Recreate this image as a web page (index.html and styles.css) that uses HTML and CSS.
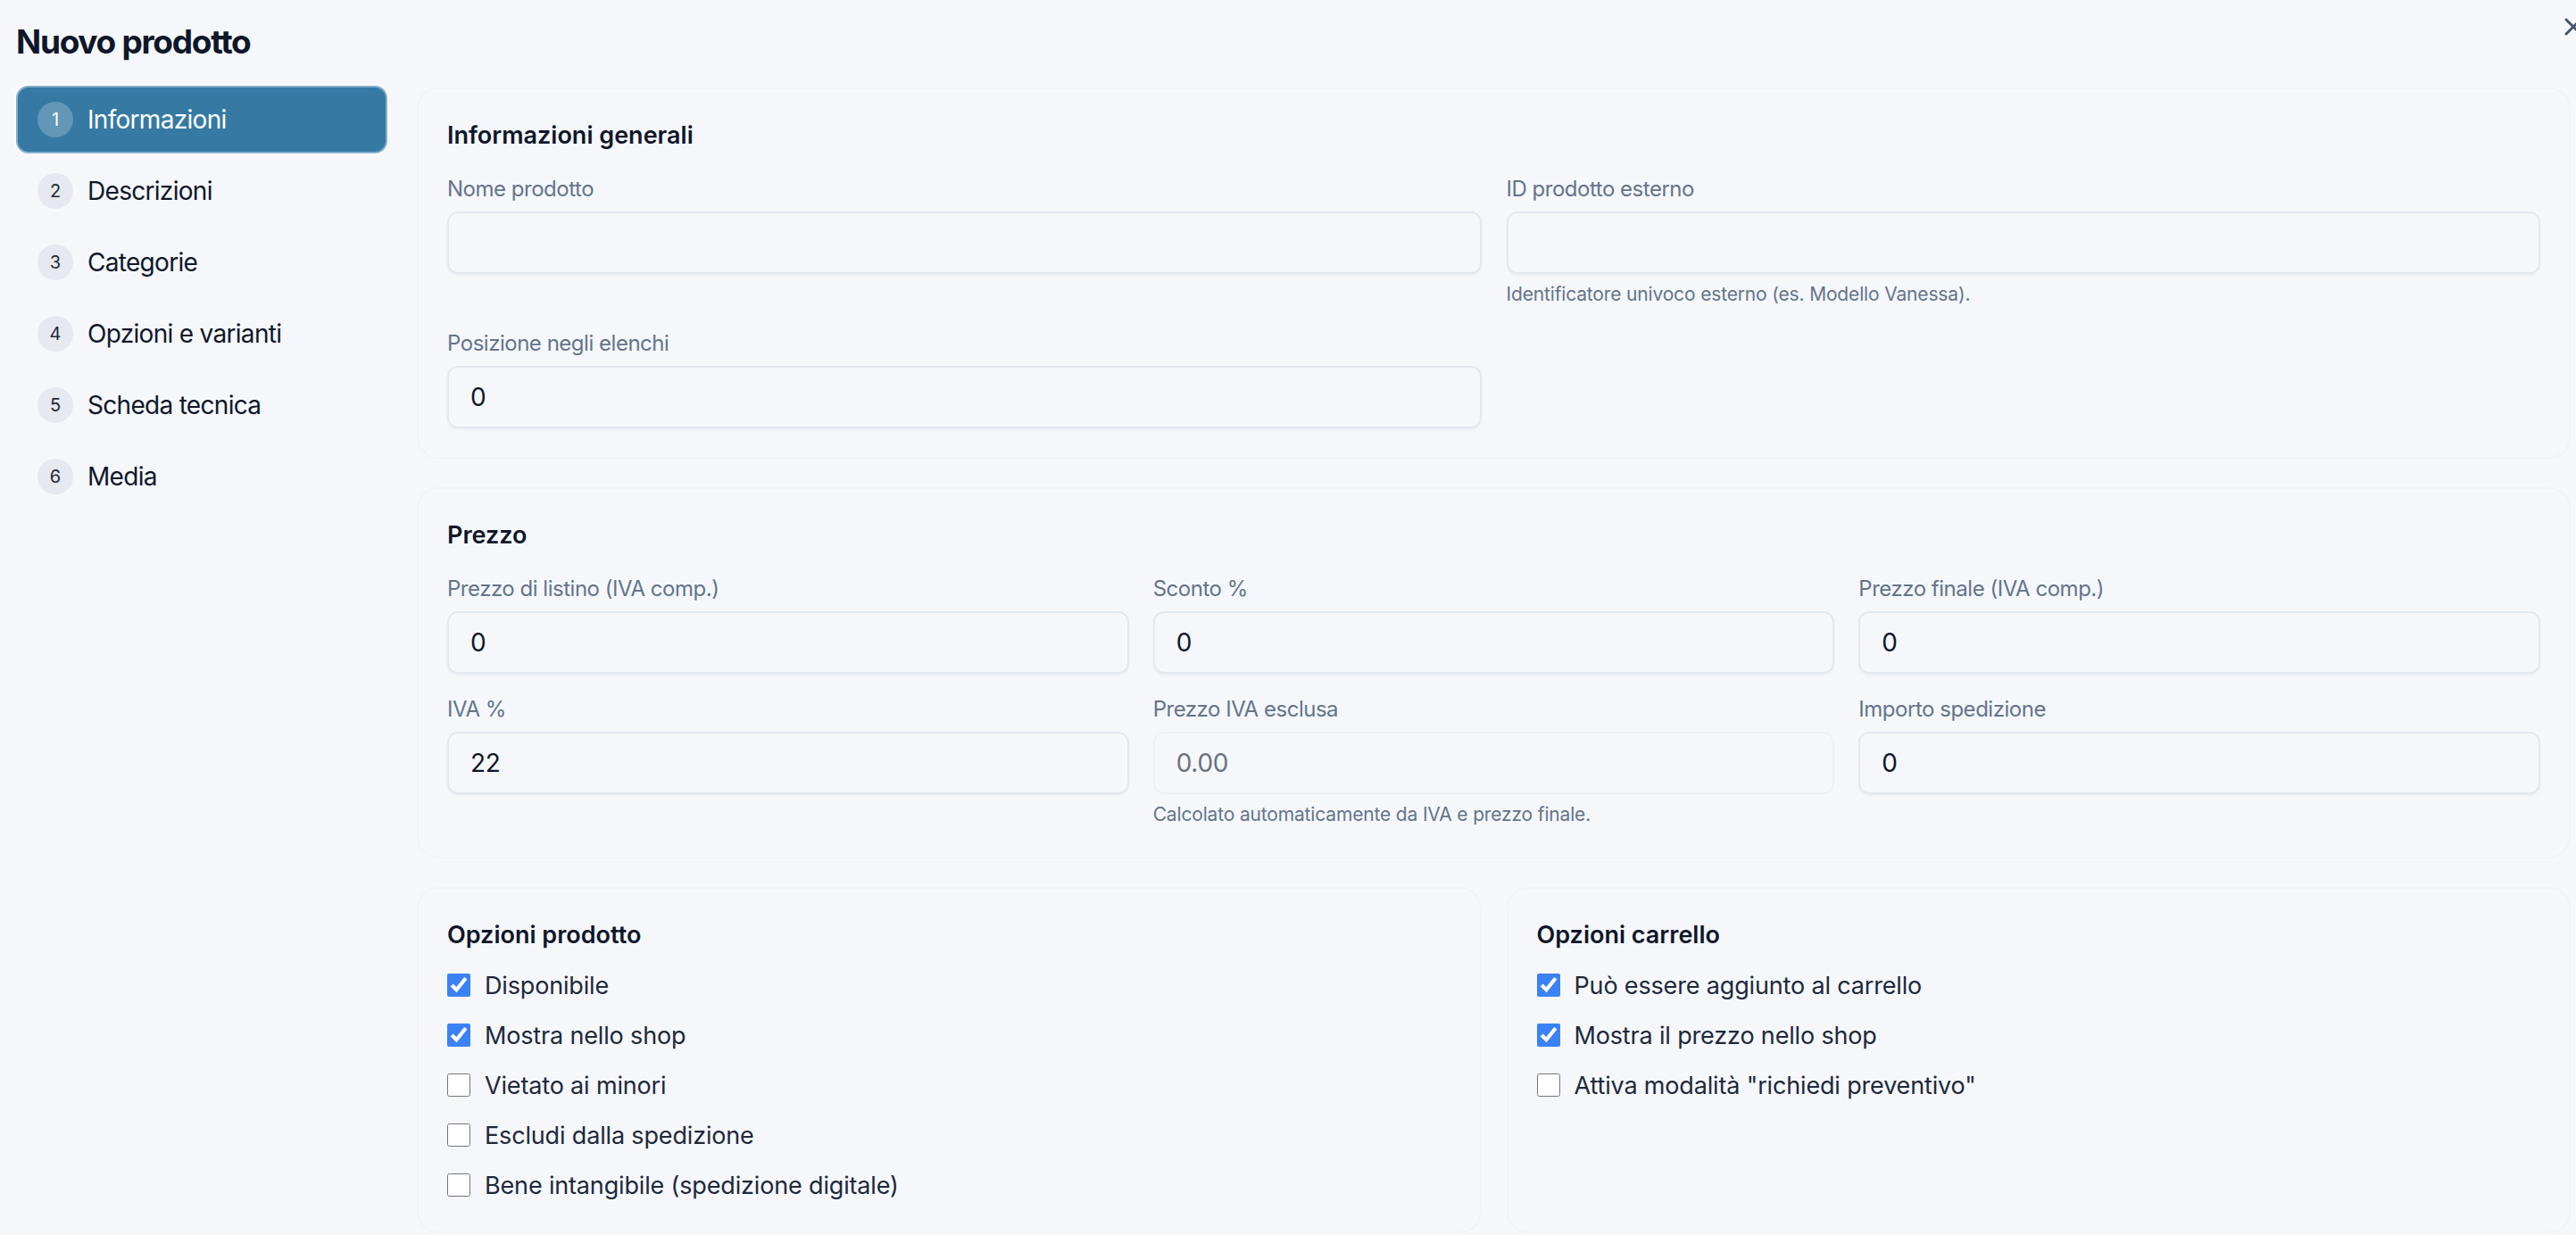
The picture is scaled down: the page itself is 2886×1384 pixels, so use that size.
FILE: index.html
```html
<!DOCTYPE html>
<html lang="it">
<head>
    <meta charset="UTF-8">
    <meta name="viewport" content="width=device-width, initial-scale=1.0">
    <title>Nuovo prodotto</title>
    <link rel="stylesheet" href="styles.css">
</head>
<body>
    <div class="modal">
        <button class="close-btn" type="button" aria-label="Chiudi">
            <svg width="22" height="22" viewBox="0 0 22 22" fill="none" stroke="currentColor" stroke-width="3" stroke-linecap="round">
                <path d="M3 3 L19 19 M19 3 L3 19"/>
            </svg>
        </button>

        <h1 class="modal-title">Nuovo prodotto</h1>

        <nav class="steps">
            <a class="step active" href="#"><span class="step-num">1</span>Informazioni</a>
            <a class="step" href="#"><span class="step-num">2</span>Descrizioni</a>
            <a class="step" href="#"><span class="step-num">3</span>Categorie</a>
            <a class="step" href="#"><span class="step-num">4</span>Opzioni e varianti</a>
            <a class="step" href="#"><span class="step-num">5</span>Scheda tecnica</a>
            <a class="step" href="#"><span class="step-num">6</span>Media</a>
        </nav>

        <main class="content">
            <section class="card">
                <h2>Informazioni generali</h2>
                <div class="grid cols-2">
                    <div class="field">
                        <label>Nome prodotto</label>
                        <input type="text" value="">
                    </div>
                    <div class="field">
                        <label>ID prodotto esterno</label>
                        <input type="text" value="">
                        <p class="hint">Identificatore univoco esterno (es. Modello Vanessa).</p>
                    </div>
                    <div class="field">
                        <label>Posizione negli elenchi</label>
                        <input type="text" value="0">
                    </div>
                </div>
            </section>

            <section class="card">
                <h2>Prezzo</h2>
                <div class="grid cols-3">
                    <div class="field">
                        <label>Prezzo di listino (IVA comp.)</label>
                        <input type="text" value="0">
                    </div>
                    <div class="field">
                        <label>Sconto %</label>
                        <input type="text" value="0">
                    </div>
                    <div class="field">
                        <label>Prezzo finale (IVA comp.)</label>
                        <input type="text" value="0">
                    </div>
                    <div class="field">
                        <label>IVA %</label>
                        <input type="text" value="22">
                    </div>
                    <div class="field">
                        <label>Prezzo IVA esclusa</label>
                        <input type="text" placeholder="0.00" disabled>
                        <p class="hint">Calcolato automaticamente da IVA e prezzo finale.</p>
                    </div>
                    <div class="field">
                        <label>Importo spedizione</label>
                        <input type="text" value="0">
                    </div>
                </div>
            </section>

            <div class="options-row">
                <section class="card options">
                    <h2>Opzioni prodotto</h2>
                    <label class="check"><input type="checkbox" checked> Disponibile</label>
                    <label class="check"><input type="checkbox" checked> Mostra nello shop</label>
                    <label class="check"><input type="checkbox"> Vietato ai minori</label>
                    <label class="check"><input type="checkbox"> Escludi dalla spedizione</label>
                    <label class="check"><input type="checkbox"> Bene intangibile (spedizione digitale)</label>
                </section>
                <section class="card options">
                    <h2>Opzioni carrello</h2>
                    <label class="check"><input type="checkbox" checked> Può essere aggiunto al carrello</label>
                    <label class="check"><input type="checkbox" checked> Mostra il prezzo nello shop</label>
                    <label class="check"><input type="checkbox"> Attiva modalità "richiedi preventivo"</label>
                </section>
            </div>
        </main>
    </div>
</body>
</html>
```

FILE: styles.css
```css
* {
    box-sizing: border-box;
}
html, body {
    margin: 0;
    overflow: hidden;
}
body {
    font-family: Inter, "Noto Sans", sans-serif;
    background: #f5f7fb;
    color: #0f172a;
    letter-spacing: -0.01em;
}
.modal {
    position: relative;
    display: grid;
    grid-template-columns: 416px 1fr;
    grid-template-rows: auto 1fr;
    column-gap: 33px;
    row-gap: 25px;
    padding: 23px 6px 0 18px;
    min-height: 1384px;
}
.close-btn {
    position: absolute;
    top: 19px;
    right: -8px;
    background: none;
    border: none;
    padding: 0;
    color: #475569;
    cursor: pointer;
}
.modal-title {
    grid-column: 1 / -1;
    margin: 0;
    font-size: 37px;
    line-height: 48px;
    font-weight: 700;
    letter-spacing: -0.035em;
}
.steps {
    display: flex;
    flex-direction: column;
    gap: 4px;
}
.step {
    display: flex;
    align-items: center;
    gap: 16px;
    height: 76px;
    padding: 0 22px;
    border: 2px solid transparent;
    border-radius: 14px;
    color: #0f172a;
    text-decoration: none;
    font-size: 28px;
    letter-spacing: -0.025em;
}
.step-num {
    display: flex;
    align-items: center;
    justify-content: center;
    width: 40px;
    height: 40px;
    border-radius: 50%;
    background: #e6e9f0;
    color: #1e293b;
    font-size: 20px;
    letter-spacing: 0;
}
.step.active {
    background: #367aa4;
    border-color: #86afcb;
    box-shadow: 0 0 0 2px #ffffff;
    color: #ffffff;
}
.step.active .step-num {
    background: rgba(255, 255, 255, 0.22);
    color: #ffffff;
}
.content {
    display: flex;
    flex-direction: column;
    gap: 32px;
    margin-top: 2px;
}
.card {
    border: 2px solid #f1f3f7;
    border-radius: 24px;
    padding: 32px;
}
.card h2 {
    margin: 0 0 24px;
    font-size: 27px;
    line-height: 40px;
    font-weight: 600;
    letter-spacing: 0;
}
.grid {
    display: grid;
    column-gap: 28px;
    row-gap: 24px;
    align-items: start;
}
.cols-2 {
    grid-template-columns: 1fr 1fr;
}
.cols-3 {
    grid-template-columns: 1fr 1fr 1fr;
    column-gap: 27px;
}
.field label {
    display: block;
    margin-bottom: 9px;
    font-size: 24px;
    line-height: 32px;
    color: #64748b;
    letter-spacing: -0.02em;
}
.field input {
    display: block;
    width: 100%;
    height: 70px;
    padding: 0 24px;
    border: 2px solid #e3e8ef;
    border-radius: 12px;
    background: #f5f7fb;
    box-shadow: 0 2px 3px rgba(15, 23, 42, 0.04);
    font-family: inherit;
    font-size: 28px;
    color: #0f172a;
    letter-spacing: -0.01em;
}
.field input:disabled {
    border-color: #edf0f4;
    box-shadow: none;
}
.field input::placeholder {
    color: #6b7280;
}
.hint {
    margin: 8px 0 0;
    font-size: 21px;
    line-height: 30px;
    color: #64748b;
}
.options-row {
    display: grid;
    grid-template-columns: 1fr 1fr;
    gap: 28px;
}
.options {
    display: flex;
    flex-direction: column;
    gap: 16px;
}
.options h2 {
    margin-bottom: 0;
}
.check {
    display: flex;
    align-items: center;
    gap: 16px;
    height: 40px;
    font-size: 27px;
    color: #1e293b;
}
.check input {
    width: 26px;
    height: 26px;
    margin: 0;
    accent-color: #3b82f6;
}
```
